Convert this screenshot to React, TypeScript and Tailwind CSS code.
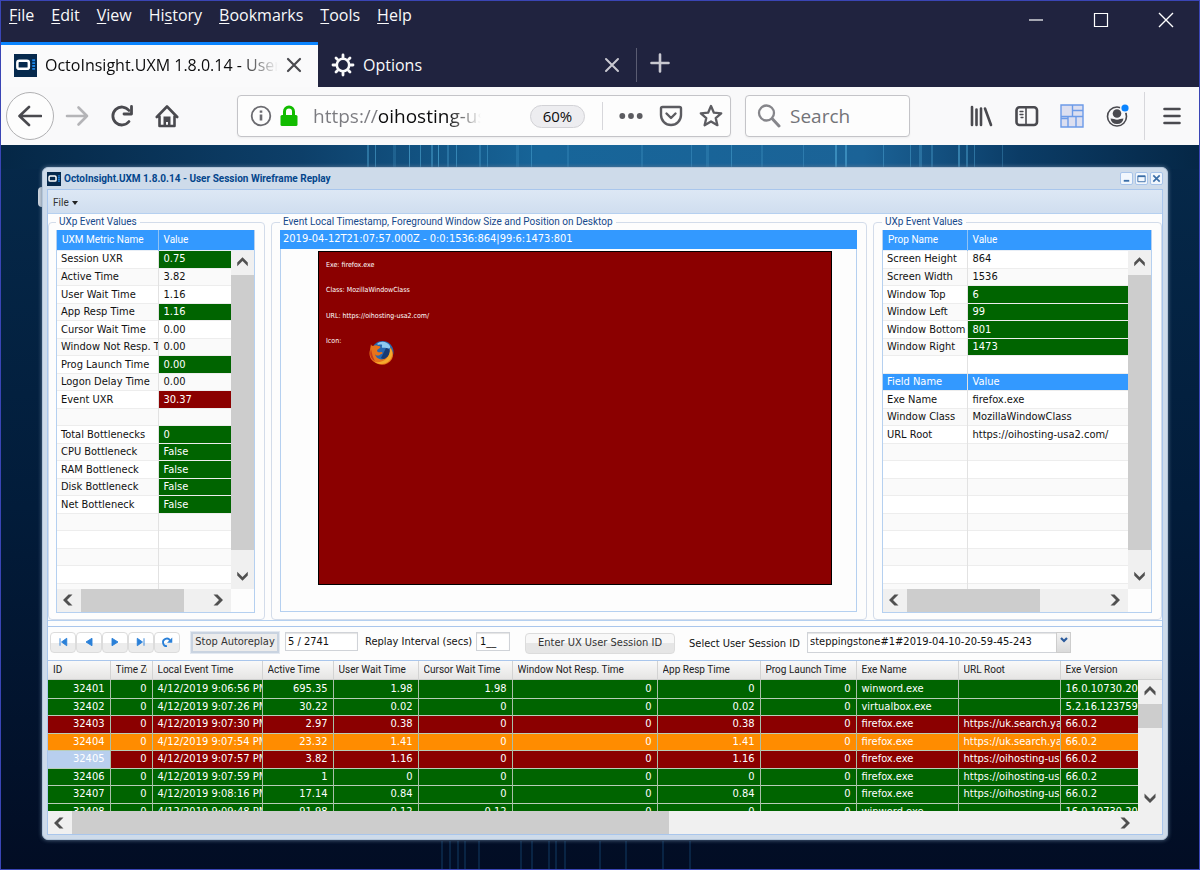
import { useState } from "react"
import clsx from "clsx"

type Tone = "good" | "bad" | "warn" | "head"

type PropRow = {
  name: string
  value: string
  tone?: Tone
}

type EventRow = {
  id: number
  tone: "good" | "bad" | "warn"
  cells: string[]
}

const TONES: Record<Tone, string> = {
  good: "bg-[#006400] text-white",
  bad: "bg-[#8b0000] text-white",
  warn: "bg-[#ff8c00] text-white",
  head: "bg-[#3399ff] text-white",
}

const METRICS: PropRow[] = [
  { name: "Session UXR", value: "0.75", tone: "good" },
  { name: "Active Time", value: "3.82" },
  { name: "User Wait Time", value: "1.16" },
  { name: "App Resp Time", value: "1.16", tone: "good" },
  { name: "Cursor Wait Time", value: "0.00" },
  { name: "Window Not Resp. Time", value: "0.00" },
  { name: "Prog Launch Time", value: "0.00", tone: "good" },
  { name: "Logon Delay Time", value: "0.00" },
  { name: "Event UXR", value: "30.37", tone: "bad" },
  { name: "", value: "" },
  { name: "Total Bottlenecks", value: "0", tone: "good" },
  { name: "CPU Bottleneck", value: "False", tone: "good" },
  { name: "RAM Bottleneck", value: "False", tone: "good" },
  { name: "Disk Bottleneck", value: "False", tone: "good" },
  { name: "Net Bottleneck", value: "False", tone: "good" },
]

const PROPS: PropRow[] = [
  { name: "Screen Height", value: "864" },
  { name: "Screen Width", value: "1536" },
  { name: "Window Top", value: "6", tone: "good" },
  { name: "Window Left", value: "99", tone: "good" },
  { name: "Window Bottom", value: "801", tone: "good" },
  { name: "Window Right", value: "1473", tone: "good" },
  { name: "", value: "" },
  { name: "Field Name", value: "Value", tone: "head" },
  { name: "Exe Name", value: "firefox.exe" },
  { name: "Window Class", value: "MozillaWindowClass" },
  { name: "URL Root", value: "https://oihosting-usa2.com/" },
]

const COLUMNS = [
  { label: "ID", width: "w-[62px]", right: true },
  { label: "Time Zone", width: "w-[42px]", right: true },
  { label: "Local Event Time", width: "w-[110px]" },
  { label: "Active Time", width: "w-[71px]", right: true },
  { label: "User Wait Time", width: "w-[85px]", right: true },
  { label: "Cursor Wait Time", width: "w-[94px]", right: true },
  { label: "Window Not Resp. Time", width: "w-[145px]", right: true },
  { label: "App Resp Time", width: "w-[103px]", right: true },
  { label: "Prog Launch Time", width: "w-[96px]", right: true },
  { label: "Exe Name", width: "w-[102px]" },
  { label: "URL Root", width: "w-[102px]" },
  { label: "Exe Version", width: "w-auto" },
]

const EVENTS: EventRow[] = [
  { id: 32401, tone: "good", cells: ["0", "4/12/2019 9:06:56 PM", "695.35", "1.98", "1.98", "0", "0", "0", "winword.exe", "", "16.0.10730.203"] },
  { id: 32402, tone: "good", cells: ["0", "4/12/2019 9:07:26 PM", "30.22", "0.02", "0", "0", "0.02", "0", "virtualbox.exe", "", "5.2.16.123759"] },
  { id: 32403, tone: "bad", cells: ["0", "4/12/2019 9:07:30 PM", "2.97", "0.38", "0", "0", "0.38", "0", "firefox.exe", "https://uk.search.ya", "66.0.2"] },
  { id: 32404, tone: "warn", cells: ["0", "4/12/2019 9:07:54 PM", "23.32", "1.41", "0", "0", "1.41", "0", "firefox.exe", "https://uk.search.ya", "66.0.2"] },
  { id: 32405, tone: "bad", cells: ["0", "4/12/2019 9:07:57 PM", "3.82", "1.16", "0", "0", "1.16", "0", "firefox.exe", "https://oihosting-us", "66.0.2"] },
  { id: 32406, tone: "good", cells: ["0", "4/12/2019 9:07:59 PM", "1", "0", "0", "0", "0", "0", "firefox.exe", "https://oihosting-us", "66.0.2"] },
  { id: 32407, tone: "good", cells: ["0", "4/12/2019 9:08:16 PM", "17.14", "0.84", "0", "0", "0.84", "0", "firefox.exe", "https://oihosting-us", "66.0.2"] },
  { id: 32408, tone: "good", cells: ["0", "4/12/2019 9:09:48 PM", "91.98", "0.12", "0.12", "0", "0", "0", "winword.exe", "", "16.0.10730.203"] },
]

const MENUS = [
  ["", "F", "ile"],
  ["", "E", "dit"],
  ["", "V", "iew"],
  ["Hi", "s", "tory"],
  ["", "B", "ookmarks"],
  ["", "T", "ools"],
  ["", "H", "elp"],
]

// x position, width and strength of the light streaks on the desktop picture
const STREAKS = [
  [366, 2, 0.4], [374, 1, 0.5], [392, 3, 0.2], [408, 1, 0.6], [419, 1, 0.5], [430, 2, 0.4], [437, 1, 0.6], [446, 2, 0.3],
  [455, 1, 0.5], [478, 2, 0.3], [486, 1, 0.4], [515, 3, 0.2], [530, 1, 0.4], [566, 2, 0.2], [640, 2, 0.2], [690, 1, 0.3],
  [705, 3, 0.2], [730, 1, 0.4], [760, 2, 0.2], [802, 1, 0.3], [834, 2, 0.5], [844, 2, 0.5], [882, 1, 0.4], [909, 1, 0.4],
  [918, 3, 0.3], [930, 2, 0.3], [957, 2, 0.5], [965, 2, 0.4], [973, 1, 0.4], [1001, 1, 0.3],
]

type Direction = "up" | "down" | "left" | "right"

const ARROWS: Record<Direction, string> = {
  up: "M6.500 11.500 12 6l5.500 5.500v4L12 10l-5.500 5.500z",
  down: "M6.500 10.500 12 16l5.500-5.500v-4L12 12 6.500 6.500z",
  left: "M11.500 6.500 6 12l5.500 5.500h4L10 12l5.500-5.500z",
  right: "M10.500 6.500 16 12l-5.500 5.500h-4L12 12 6.500 6.500z",
}

function ArrowButton({ direction, className }: { direction: Direction; className?: string }) {
  return (
    <button type="button" aria-label={`Scroll ${direction}`} className={clsx("flex shrink-0 items-center justify-center bg-[#f0f0f0]", className)}>
      <svg viewBox="0 0 24 24" className="size-6" fill="#505050">
        <path d={ARROWS[direction]} />
      </svg>
    </button>
  )
}

function AppLogo({ className }: { className?: string }) {
  return (
    <svg viewBox="0 0 24 24" className={className}>
      <rect width="24" height="24" fill="#06294d" />
      <rect x="3.500" y="7" width="12" height="8.500" rx="2" fill="none" stroke="#fff" strokeWidth="2.600" />
      <path d="M20.500 5.500v11" stroke="#1c86e8" strokeWidth="3" strokeDasharray="2 1" />
    </svg>
  )
}

function FirefoxLogo() {
  return (
    <svg viewBox="0 0 26 26" className="mt-3 size-[26px]">
      <circle cx="13.500" cy="12" r="11" fill="#2767b0" />
      <path d="M8 4c4-4 11-2 13 2 1 3-2 3-4 2s-5 1-4-2-4 0-5-2z" fill="#8ec9f0" />
      <path d="M17 8c3 0 5 3 4 7-2 4-6 5-9 3z" fill="#173a73" />
      <path d="M2 4c0 1 1 2 2 2 2-1 4-1 5 0 2 0 3 1 2 2s-3 1-3 3c1 2 3 1 4 1 2 0 2 2 0 2-2 2-5 2-6 0 1 5 7 7 11 4 4-2 5-7 4-11 3 3 4 8 2 12-3 5-9 7-14 5C3 22-1 17 1 10z" fill="#e8731a" />
      <path d="M21 8c3 3 3 8 0 12-4 5-11 5-15 2 8 1 15-3 15-14z" fill="#f5a92d" />
      <path d="M2 9c-2 6 0 10 4 12-2-3-3-7-4-12z" fill="#c4391a" />
    </svg>
  )
}

function BrowserChrome() {
  const [search, setSearch] = useState("")
  const [url, setUrl] = useState("https://oihosting-usa2.com/")

  return (
    <header className="font-['Open_Sans','Noto_Sans',sans-serif] text-[#f9f9fa]">
      <div className="flex h-[41px] items-start justify-between bg-[#20233f]">
        <nav className="flex gap-[17px] pt-0.5 pl-2 text-base leading-6">
          {MENUS.map(([before, key, after]) => (
            <button type="button" key={key + after} className="h-6">
              {before}
              <u className="underline-offset-2">{key}</u>
              {after}
            </button>
          ))}
        </nav>
        <div className="flex gap-[41px] pt-[7px] pr-[21px]">
          <button type="button" aria-label="Minimize">
            <svg viewBox="0 0 24 24" className="size-6" stroke="#fff" strokeWidth="1.200"><path d="M5 12h14" /></svg>
          </button>
          <button type="button" aria-label="Maximize">
            <svg viewBox="0 0 24 24" className="size-6" fill="none" stroke="#fff" strokeWidth="1.200"><path d="M5.500 5.500h13v13h-13z" /></svg>
          </button>
          <button type="button" aria-label="Close">
            <svg viewBox="0 0 24 24" className="size-6" stroke="#fff" strokeWidth="1.400"><path d="m5 5 14 14M19 5 5 19" /></svg>
          </button>
        </div>
      </div>

      <div className="flex h-[45px] bg-[#20233f] text-base">
        <div className="flex w-[317px] items-center border-t-[3px] border-[#0a84ff] bg-[#fafafb] pb-0.5 pl-[13px] text-[#0c0c0d]">
          <AppLogo className="size-[23px] shrink-0" />
          <button type="button" className="ml-2 w-[233px] overflow-hidden text-left whitespace-nowrap [mask-image:linear-gradient(to_right,#000_84%,transparent)]">
            OctoInsight.UXM 1.8.0.14 - User
          </button>
          <button type="button" aria-label="Close tab" className="ml-1">
            <svg viewBox="0 0 24 24" className="size-6" stroke="#4a4a4f" strokeWidth="2.200" strokeLinecap="round"><path d="m6 6 12 12M18 6 6 18" /></svg>
          </button>
        </div>
        <div className="flex w-[318px] items-center border-t-[3px] border-transparent pr-3 pb-0.5 pl-[13px]">
          <svg viewBox="0 0 24 24" className="size-6" fill="none" stroke="#f9f9fa">
            <circle cx="12" cy="12" r="6.200" strokeWidth="2.600" />
            <path strokeWidth="2.800" strokeLinecap="round" d="M12 2v2.500M12 19.500V22M2 12h2.500M19.500 12H22M5 5l1.500 1.500M17.500 17.500 19 19M19 5l-1.500 1.500M6.500 17.500 5 19" />
          </svg>
          <button type="button" className="ml-2 flex-1 text-left">Options</button>
          <button type="button" aria-label="Close tab">
            <svg viewBox="0 0 24 24" className="size-6" stroke="#c8c8d0" strokeWidth="2" strokeLinecap="round"><path d="m6 6 12 12M18 6 6 18" /></svg>
          </button>
        </div>
        <div className="mt-1.5 h-[34px] w-px bg-[#5a5c72]" />
        <button type="button" aria-label="New tab" className="ml-[11px] h-[42px]">
          <svg viewBox="0 0 24 24" className="size-6" stroke="#c8c8d0" strokeWidth="2.600" strokeLinecap="round"><path d="M12 3.500v17M3.500 12h17" /></svg>
        </button>
      </div>

      <div className="flex h-[58px] items-center bg-[#f9f9fa] pr-[15px] pl-[5px] text-[#4a4a4f]">
        <button type="button" aria-label="Back" className="flex size-12 items-center justify-center rounded-full border border-[#b1b1b3] bg-[#fdfdfd]">
          <svg viewBox="0 0 24 24" className="size-6" fill="none" stroke="currentColor" strokeWidth="2.600" strokeLinecap="round" strokeLinejoin="round"><path d="M23 12H2M11 3l-9.500 9 9.500 9" /></svg>
        </button>
        <div className="ml-[11px] flex gap-[21px]">
          <button type="button" aria-label="Forward">
            <svg viewBox="0 0 24 24" className="size-6" fill="none" stroke="#b4b4b7" strokeWidth="2.600" strokeLinecap="round" strokeLinejoin="round"><path d="M2 12h20M13.500 3.500 22 12l-8.500 8.500" /></svg>
          </button>
          <button type="button" aria-label="Reload">
            <svg viewBox="0 0 24 24" className="size-6" fill="none" stroke="currentColor" strokeWidth="2.800" strokeLinecap="round" strokeLinejoin="round">
              <path d="M19 17.500A9 9 0 1 1 19 6.500" />
              <path d="M21.500 2.500V10H14" />
            </svg>
          </button>
          <button type="button" aria-label="Home">
            <svg viewBox="0 0 24 24" className="size-6" fill="none" stroke="currentColor" strokeWidth="2.600" strokeLinecap="round" strokeLinejoin="round">
              <path d="M1.800 13 12 2.500 22.200 13M4.500 12.500V22h15v-9.500" />
              <path d="M8.500 22v-9.500h7V22h-2.500v-4h-2v4z" fill="currentColor" stroke="none" />
            </svg>
          </button>
        </div>

        <div className="ml-[58px] flex h-[42px] flex-1 items-center rounded-sm border border-[#c4c4c8] bg-[#fdfdfd] pr-[7px] pl-[11px] shadow-xs">
          <svg viewBox="0 0 24 24" className="size-6 shrink-0" fill="none" stroke="#6b6b70" strokeWidth="1.800">
            <circle cx="12" cy="12" r="9.300" />
            <path d="M12 10.500v6M12 6.500v2.200" strokeWidth="2.600" />
          </svg>
          <svg viewBox="0 0 24 24" className="ml-1 size-6 shrink-0" fill="#12bc00">
            <rect x="3.500" y="11" width="17" height="11" rx="1.500" />
            <path d="M7.500 12V7.500a4.500 4.500 0 0 1 9 0V12" fill="none" stroke="#12bc00" strokeWidth="3" />
          </svg>
          <input
            aria-label="Address"
            value={url}
            onChange={(e) => setUrl(e.target.value)}
            className="ml-3 w-[168px] bg-[linear-gradient(to_right,#7b7b80_64px,#0c0c0d_64px,#0c0c0d_135px,transparent_168px)] bg-clip-text text-[19px] text-transparent outline-none"
          />
          <button type="button" className="ml-auto h-[23px] w-[55px] rounded-full border border-[#d2d2d6] bg-[#ededf0] text-[15px] leading-5 text-[#0c0c0d]">60%</button>
          <div className="ml-[17px] h-7 w-px bg-[#d7d7db]" />
          <button type="button" aria-label="Page actions" className="ml-4">
            <svg viewBox="0 0 24 24" className="size-6" fill="#5c5c61"><circle cx="3.300" cy="12" r="2.900" /><circle cx="12" cy="12" r="2.900" /><circle cx="20.700" cy="12" r="2.900" /></svg>
          </button>
          <button type="button" aria-label="Save to Pocket" className="ml-4">
            <svg viewBox="0 0 24 24" className="size-6" fill="none" stroke="#5c5c61" strokeWidth="2.400" strokeLinecap="round" strokeLinejoin="round"><path d="M3.500 3h17q1.500 0 1.500 1.500V11a10 10 0 0 1-20 0V4.500Q2 3 3.500 3zM7.500 9.500l4.500 4.500 4.500-4.500" /></svg>
          </button>
          <button type="button" aria-label="Bookmark" className="ml-4">
            <svg viewBox="0 0 24 24" className="size-6" fill="none" stroke="#5c5c61" strokeWidth="2.300" strokeLinejoin="round"><path d="m12 2 2.900 6.700 7.300.6-5.500 4.800 1.700 7.100L12 17.400l-6.400 3.800 1.700-7.100-5.500-4.800 7.300-.6z" /></svg>
          </button>
        </div>

        <label className="ml-3.5 flex h-[42px] w-[165px] items-center rounded-sm border border-[#c4c4c8] bg-[#fdfdfd] pl-[11px] shadow-xs">
          <svg viewBox="0 0 24 24" className="size-6 shrink-0" fill="none" stroke="#86868b" strokeLinecap="round"><circle cx="9.500" cy="9" r="7.500" strokeWidth="2.300" /><path d="m15.500 15 6.500 7" strokeWidth="3" /></svg>
          <input
            aria-label="Search"
            placeholder="Search"
            value={search}
            onChange={(e) => setSearch(e.target.value)}
            className="ml-[9px] w-full min-w-0 text-[19px] text-[#0c0c0d] outline-none placeholder:text-[#737378]"
          />
        </label>

        <div className="ml-[60px] flex gap-[21px]">
          <button type="button" aria-label="Library">
            <svg viewBox="0 0 24 24" className="size-6" fill="none" stroke="currentColor" strokeWidth="2.600" strokeLinecap="round"><path d="M2 3v18M6.500 5.500V21M11 4.500V21M15 4.500 21 21" /></svg>
          </button>
          <button type="button" aria-label="Sidebars">
            <svg viewBox="0 0 24 24" className="size-6" fill="none" stroke="currentColor" strokeLinecap="round"><rect x="1.500" y="3.200" width="20.500" height="17.800" rx="3" strokeWidth="2.600" /><path d="M11 4v16.500" strokeWidth="1.600" /><path d="M5 7.500h3M5 10.500h3M6 13.500h2" strokeWidth="1.300" /></svg>
          </button>
          <button type="button" aria-label="Wireframe">
            <svg viewBox="0 0 24 24" className="size-6" fill="#dcdff0" stroke="#6c9be8" strokeWidth="1.400"><path d="M1 1h22v22H1zM12.500 1v12M1 12.500h22M12.500 6.500h10.500M8 12.500V23M16 12.500V23M1 14.500h7" /></svg>
          </button>
          <button type="button" aria-label="Account">
            <svg viewBox="0 0 24 24" className="size-6" fill="currentColor">
              <circle cx="12" cy="12.500" r="9.500" fill="none" stroke="currentColor" strokeWidth="1.600" />
              <circle cx="12" cy="9.500" r="4.300" />
              <path d="M5.500 14.500q2 0 3.500.5 3 1.500 6 0 1.500-.5 3.500-.5-1 5.500-6.500 5.500t-6.500-5.500z" />
              <circle cx="20" cy="4" r="5" fill="#f9f9fa" />
              <circle cx="20" cy="4" r="3.600" fill="#0a84ff" />
            </svg>
          </button>
        </div>
        <div className="mr-[15px] ml-[15px] h-12 w-px bg-[#d7d7db]" />
        <button type="button" aria-label="Open menu">
          <svg viewBox="0 0 24 24" className="size-6" stroke="currentColor" strokeWidth="2.600" strokeLinecap="round"><path d="M4.500 5h15M4.500 12h15M4.500 19h15" /></svg>
        </button>
      </div>
    </header>
  )
}

type PropGridProps = {
  title: string
  rows: PropRow[]
  nameWidth: string
  thumbWidth: string
}

function PropGrid({ title, rows, nameWidth, thumbWidth }: PropGridProps) {
  const filler = Array.from({ length: 20 - rows.length }, () => ({ name: "", value: "" }) as PropRow)

  return (
    <div className="border-x border-b border-[#b5d0f0]">
      <table className="w-full table-fixed border-collapse font-[Roboto,sans-serif] text-[10px] text-white">
        <thead>
          <tr className="h-5 border-b border-[#e8eef6] bg-[#3399ff]">
            <th scope="col" className={clsx("border-r border-[#8fc2f5] pl-[5px] text-left font-normal whitespace-nowrap", nameWidth)}>{title}</th>
            <th scope="col" className="pl-[5px] text-left font-normal">Value</th>
          </tr>
        </thead>
      </table>
      <div className="flex h-[338px] overflow-hidden">
        <div className="min-w-0 flex-1">
          <table className="w-full table-fixed border-collapse bg-white leading-4">
            <tbody>
              {[...rows, ...filler].map((row, i) => (
                <tr key={i} className="border-b border-[#ededed] odd:h-[18px] even:h-[17px] even:bg-[#fafafa]">
                  <td className={clsx("overflow-hidden border-r border-[#e2e2e2] p-0 pl-1 whitespace-nowrap", nameWidth, row.tone === "head" && TONES.head)}>{row.name}</td>
                  <td className={clsx("overflow-hidden p-0 pl-[5px] whitespace-nowrap", row.tone && TONES[row.tone])}>{row.value}</td>
                </tr>
              ))}
            </tbody>
          </table>
        </div>
        <div className="flex w-[23px] flex-col bg-[#f0f0f0]">
          <ArrowButton direction="up" className="h-6" />
          <div className="h-[275px] bg-[#cdcdcd]" />
          <ArrowButton direction="down" className="mt-auto h-6" />
        </div>
      </div>
      <div className="mr-[23px] flex h-[23px] bg-[#f0f0f0]">
        <ArrowButton direction="left" className="w-6" />
        <div className={clsx("bg-[#cdcdcd]", thumbWidth)} />
        <ArrowButton direction="right" className="ml-auto w-6" />
      </div>
    </div>
  )
}

function Group({ legend, className, children }: { legend: string; className?: string; children: React.ReactNode }) {
  return (
    <fieldset className={clsx("min-w-0 rounded border border-[#d3dcea] pb-1.5", className)}>
      <legend className="h-4 px-[3px] font-[Roboto,sans-serif] text-[10px] leading-4 text-[#15498b]">{legend}</legend>
      {children}
    </fieldset>
  )
}

function WireframeView() {
  return (
    <div>
      <div className="h-[19px] overflow-hidden bg-[#3399ff] pl-[3px] leading-[18px] whitespace-nowrap text-white">
        2019-04-12T21:07:57.000Z - 0:0:1536:864|99:6:1473:801
      </div>
      <div className="h-[363px] border border-t-0 border-[#b5d0f0] bg-[#fdfdfd] pt-0.5 pr-6 pl-[37px]">
        <div className="h-[334px] border border-black bg-[#8b0000] pl-[7px] text-[7px] text-white">
          <div className="grid h-[102px] grid-rows-4 items-center">
            <p>Exe: firefox.exe</p>
            <p>Class: MozillaWindowClass</p>
            <p>URL: https://oihosting-usa2.com/</p>
            <div className="flex h-[26px] items-start gap-7">
              <p className="leading-[26px]">Icon:</p>
              <FirefoxLogo />
            </div>
          </div>
        </div>
      </div>
    </div>
  )
}

const NAV_BUTTONS = [
  { label: "First", path: "M4 3v10M13 3 6 8l7 5z" },
  { label: "Previous", path: "M12 3 4 8l8 5z" },
  { label: "Next", path: "m4 3 8 5-8 5z" },
  { label: "Last", path: "M12 3v10M3 3l7 5-7 5z" },
]

function ReplayToolbar() {
  const [position, setPosition] = useState("5 / 2741")
  const [interval, setInterval] = useState("1__")

  return (
    <div className="flex h-[34px] items-start border-b border-[#a9c6ec] pt-[5px] pl-[2px]">
      <div className="flex">
        {NAV_BUTTONS.map((b) => (
          <button type="button" key={b.label} aria-label={b.label} className="flex h-[21px] w-[26px] items-center justify-center rounded-sm border border-[#dcdcdc] bg-linear-to-b from-white from-50% to-[#ececec] to-50%">
            <svg viewBox="0 0 16 16" className="size-3" fill="#2a80d8" stroke="#2a80d8" strokeWidth="1.200"><path d={b.path} /></svg>
          </button>
        ))}
        <button type="button" aria-label="Refresh" className="flex h-[21px] w-[26px] items-center justify-center rounded-sm border border-[#dcdcdc] bg-linear-to-b from-white from-50% to-[#ececec] to-50%">
          <svg viewBox="0 0 16 16" className="size-3" fill="none" stroke="#2a80d8" strokeWidth="2.400"><path d="M8 13.500A5 5 0 1 1 12 6" /><path d="M15 2v7H8z" fill="#2a80d8" stroke="none" /></svg>
        </button>
      </div>
      <button type="button" className="ml-[11px] h-[21px] w-[88px] border-2 border-[#c9d3e0] bg-[#ececec] leading-4 whitespace-nowrap text-[#333] outline outline-[#e3e9f1]">Stop Autoreplay</button>
      <input aria-label="Position" value={position} onChange={(e) => setPosition(e.target.value)} className="ml-1.5 h-[19px] w-[73px] border border-[#d0d3d8] bg-white pl-0.5 shadow-[inset_0_1px_1px_#e4e4e4] outline-none" />
      <label htmlFor="interval" className="ml-[7px] w-[108px] leading-5 whitespace-nowrap">Replay Interval (secs)</label>
      <input id="interval" value={interval} onChange={(e) => setInterval(e.target.value)} className="ml-[3px] h-[19px] w-[34px] border border-[#d0d3d8] bg-white pl-[3px] shadow-[inset_0_1px_1px_#e4e4e4] outline-none" />
      <button type="button" className="mt-px ml-[15px] h-[21px] w-[150px] rounded-sm border border-[#dcdcdc] bg-linear-to-b from-[#f8f8f8] from-50% to-[#e6e6e6] to-50% leading-4 whitespace-nowrap text-[#333]">Enter UX User Session ID</button>
      <label htmlFor="session" className="ml-[14px] w-[111px] leading-6 whitespace-nowrap">Select User Session ID</label>
      <div className="relative ml-[7px] h-[21px] w-[264px]">
        <select id="session" className="h-[21px] w-full appearance-none border border-[#d0d3d8] bg-white pl-0.5 shadow-[inset_0_1px_1px_#e4e4e4] outline-none">
          <option>steppingstone#1#2019-04-10-20-59-45-243</option>
        </select>
        <span className="pointer-events-none absolute inset-y-0 right-0 flex w-[15px] items-start justify-center border border-[#cdcdcd] bg-linear-to-b from-[#f2f2f2] to-[#dadada] pt-1">
          <svg viewBox="0 0 8 6" className="h-1.5 w-2" fill="none" stroke="#2a5a9c" strokeWidth="2.200"><path d="m1 1 3 3 3-3" /></svg>
        </span>
      </div>
    </div>
  )
}

function EventGrid() {
  return (
    <div>
      <table className="w-full table-fixed border-collapse font-[Roboto,sans-serif] text-[10px] text-[#222]">
        <thead>
          <tr className="h-[19px] border-b border-[#d0d0d0] bg-linear-to-b from-[#f9f9f9] to-[#e6e5e4]">
            {COLUMNS.map((c) => (
              <th key={c.label} scope="col" className={clsx("border-r border-[#d3d3d3] p-0 px-[5px] text-left font-normal last:border-r-0", c.width)}>
                <div className="overflow-hidden whitespace-nowrap">{c.label}</div>
              </th>
            ))}
          </tr>
        </thead>
      </table>
      <div className="flex h-[131px] overflow-hidden">
        <div className="min-w-0 flex-1">
          <table className="w-full table-fixed border-collapse leading-4">
            <colgroup>
              {COLUMNS.map((c) => (
                <col key={c.label} className={c.width} />
              ))}
            </colgroup>
            <tbody>
              {EVENTS.map((event) => (
                <tr key={event.id} className={clsx("border-b border-[#b9cdb9] odd:h-[18px] even:h-[17px]", TONES[event.tone])}>
                  {[String(event.id), ...event.cells].map((cell, i) => (
                    <td
                      key={i}
                      className={clsx(
                        "overflow-hidden border-r border-[#a9bfa9] p-0 px-[5px] whitespace-nowrap last:border-r-0",
                        COLUMNS[i].right && "text-right",
                        i === 0 && event.id === 32405 && "bg-[#b8cfee]"
                      )}
                    >
                      {cell}
                    </td>
                  ))}
                </tr>
              ))}
            </tbody>
          </table>
        </div>
        <div className="flex w-6 flex-col bg-[#f0f0f0]">
          <ArrowButton direction="up" className="h-6" />
          <div className="h-6 bg-[#cdcdcd]" />
          <ArrowButton direction="down" className="mt-auto h-6" />
        </div>
      </div>
      <div className="flex h-[23px] bg-[#f0f0f0] pr-6">
        <ArrowButton direction="left" className="w-6" />
        <div className="w-[597px] bg-[#cdcdcd]" />
        <ArrowButton direction="right" className="ml-auto w-6" />
      </div>
    </div>
  )
}

function ReplayWindow() {
  return (
    <section className="relative rounded-md border border-[#b4c6da] bg-[#cedbea] px-1 pb-1 font-['DejaVu_Sans_Condensed','DejaVu_Sans',sans-serif] text-[11px] text-[#111] shadow-[0_0_4px_#5f7894]">
      <div className="flex h-[21px] items-center">
        <AppLogo className="size-3.5" />
        <h1 className="ml-[3px] flex-1 font-[Roboto,sans-serif] text-[10px] font-bold text-[#04468c]">OctoInsight.UXM 1.8.0.14 - User Session Wireframe Replay</h1>
        <div className="flex gap-0.5">
          <button type="button" aria-label="Minimize window" className="rounded-xs border border-[#a8c4ea] bg-[#f2f7fd]">
            <svg viewBox="0 0 12 12" className="size-[11px]"><path d="M3 8.500h6" stroke="#3b6ea8" strokeWidth="2" /></svg>
          </button>
          <button type="button" aria-label="Maximize window" className="rounded-xs border border-[#a8c4ea] bg-[#f2f7fd]">
            <svg viewBox="0 0 12 12" className="size-[11px]" fill="none" stroke="#3b6ea8"><path d="M2 3.500h8" strokeWidth="2" /><path d="M2 3v6.500h8V3" /></svg>
          </button>
          <button type="button" aria-label="Close window" className="rounded-xs border border-[#a8c4ea] bg-[#f2f7fd]">
            <svg viewBox="0 0 12 12" className="size-[11px]" stroke="#3b6ea8" strokeWidth="1.800"><path d="m2.500 2.500 7 7M9.500 2.500l-7 7" /></svg>
          </button>
        </div>
      </div>

      <div className="border border-[#a9c6ec] bg-[#fdfdfd]">
        <div className="flex h-6 items-center border-b border-[#b5d0f0] bg-linear-to-b from-[#dde8f5] to-[#d0deef] pt-0.5 pl-[5px]">
          <button type="button" className="flex items-center gap-[3px] font-[Roboto,sans-serif] text-[10px] text-[#333]">
            File
            <svg viewBox="0 0 6 4" className="h-1 w-1.5" fill="#222"><path d="M0 0h6L3 4z" /></svg>
          </button>
        </div>

        <div className="flex gap-1.5 border-b border-[#b5d0f0]">
          <Group legend="UXp Event Values" className="w-[217px] pr-[9px] pl-[7px]">
            <PropGrid title="UXM Metric Name" rows={METRICS} nameWidth="w-[101px]" thumbWidth="w-[103px]" />
          </Group>
          <Group legend="Event Local Timestamp, Foreground Window Size and Position on Desktop" className="flex-1 pr-[9px] pl-2">
            <WireframeView />
          </Group>
          <Group legend="UXp Event Values" className="w-[289px] pr-[9px] pl-2">
            <PropGrid title="Prop Name" rows={PROPS} nameWidth="w-[84px]" thumbWidth="w-[133px]" />
          </Group>
        </div>

        <div className="mt-[5px] border-t border-[#a9c6ec]">
          <ReplayToolbar />
          <EventGrid />
        </div>
      </div>
    </section>
  )
}

export default function App() {
  return (
    <div className="flex min-h-screen flex-col border border-[#3a45b5] bg-[#020d24]">
      <BrowserChrome />
      <main className="relative flex-1 bg-linear-to-b from-[#06294a] via-[#021c3a] to-[#020d24] pt-[22px] pr-[31px] pb-[29px] pl-[41px]">
        <svg className="absolute inset-x-0 top-0 h-6 w-full" viewBox="0 0 1198 24" preserveAspectRatio="none">
          <defs>
            <linearGradient id="glow">
              <stop offset="0" stopColor="#052746" />
              <stop offset="0.250" stopColor="#0d3f69" />
              <stop offset="0.450" stopColor="#176599" />
              <stop offset="0.720" stopColor="#1b6397" />
              <stop offset="0.850" stopColor="#0b3c66" />
              <stop offset="1" stopColor="#052746" />
            </linearGradient>
          </defs>
          <rect width="1198" height="24" fill="url(#glow)" />
          {STREAKS.map(([x, w, o]) => (
            <rect key={x} x={x} width={w} height="24" fill="#58b4e0" opacity={o} />
          ))}
        </svg>
        <svg className="absolute inset-x-0 bottom-0 h-7 w-full" viewBox="0 0 1198 28" preserveAspectRatio="none" fill="#1a5a90">
          {[440, 448, 456, 463, 477, 519, 530, 547, 554, 563, 598, 624, 661, 688].map((x) => (
            <rect key={x} x={x} width="2" height="28" opacity="0.300" />
          ))}
        </svg>
        <div className="absolute top-[42px] left-[37px] h-5 w-2 rounded bg-[#cfd6de]" />
        <ReplayWindow />
      </main>
    </div>
  )
}
